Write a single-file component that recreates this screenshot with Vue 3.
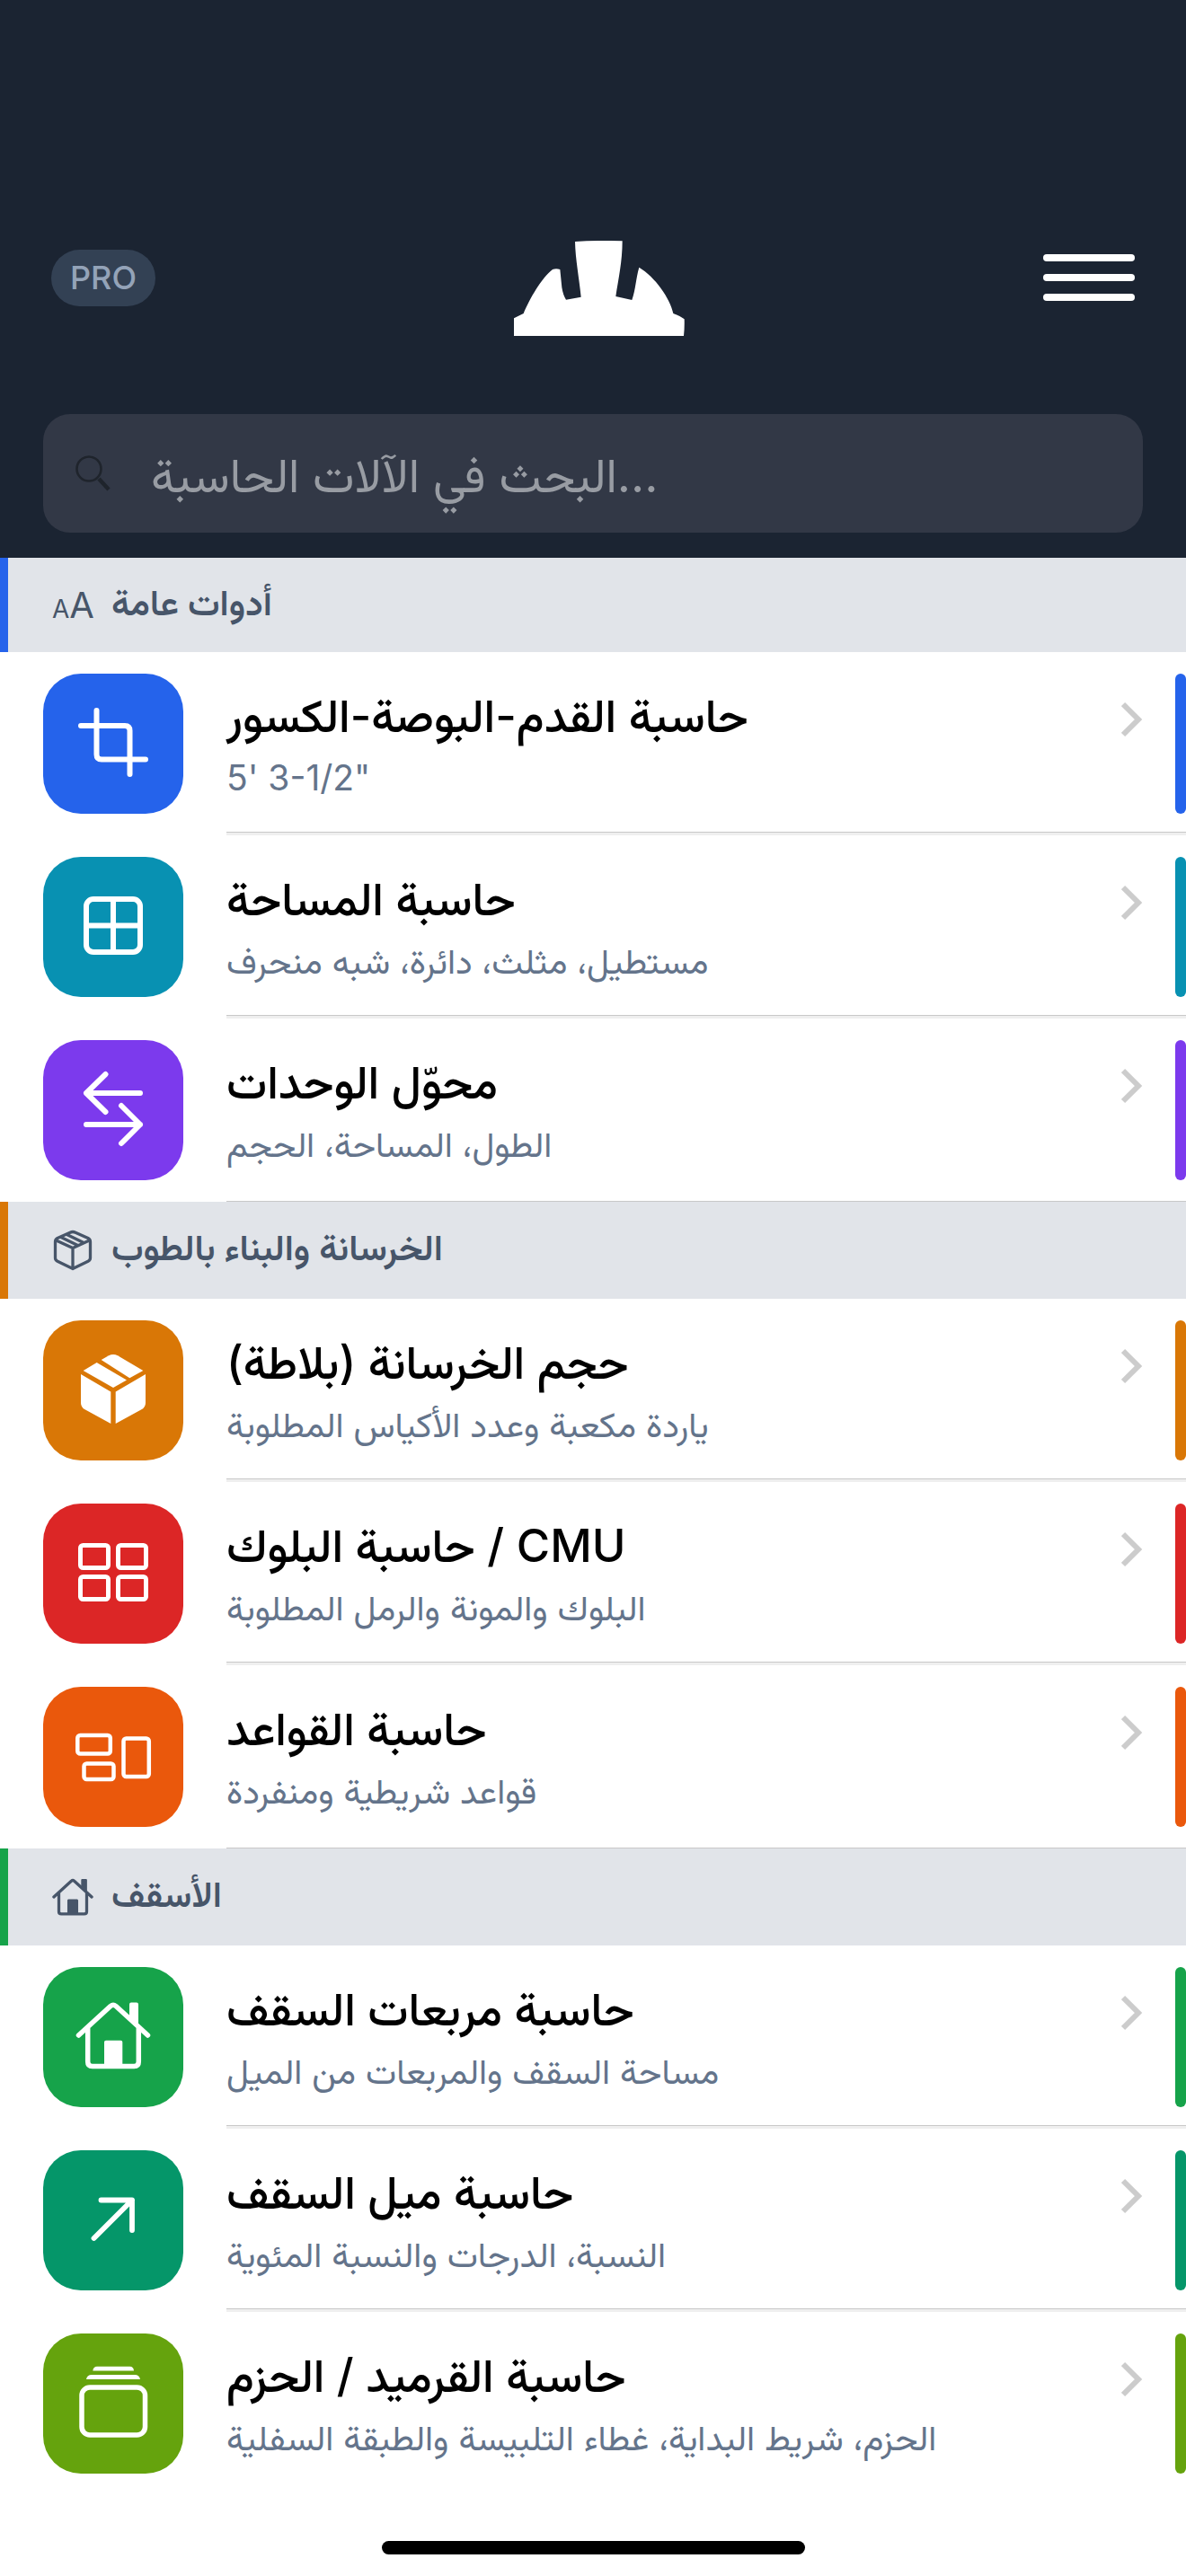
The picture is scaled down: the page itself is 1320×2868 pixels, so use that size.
<script setup>
import { ref } from 'vue'

const query = ref('')

const sections = [
  {
    title: 'أدوات عامة',
    icon: 'text',
    color: '#2563eb',
    items: [
      { title: 'حاسبة القدم-البوصة-الكسور', sub: '5\' 3-1/2"', icon: 'crop', color: '#2563eb' },
      { title: 'حاسبة المساحة', sub: 'مستطيل، مثلث، دائرة، شبه منحرف', icon: 'grid', color: '#0891b2' },
      { title: 'محوّل الوحدات', sub: 'الطول، المساحة، الحجم', icon: 'swap', color: '#7c3aed' },
    ]
  },
  {
    title: 'الخرسانة والبناء بالطوب',
    icon: 'box',
    color: '#d97706',
    items: [
      { title: 'حجم الخرسانة (بلاطة)', sub: 'ياردة مكعبة وعدد الأكياس المطلوبة', icon: 'cube', color: '#d97706' },
      { title: 'حاسبة البلوك / CMU', sub: 'البلوك والمونة والرمل المطلوبة', icon: 'blocks', color: '#dc2626' },
      { title: 'حاسبة القواعد', sub: 'قواعد شريطية ومنفردة', icon: 'footing', color: '#ea580c' },
    ]
  },
  {
    title: 'الأسقف',
    icon: 'house',
    color: '#16a34a',
    items: [
      { title: 'حاسبة مربعات السقف', sub: 'مساحة السقف والمربعات من الميل', icon: 'house', color: '#16a34a' },
      { title: 'حاسبة ميل السقف', sub: 'النسبة، الدرجات والنسبة المئوية', icon: 'arrow', color: '#059669' },
      { title: 'حاسبة القرميد / الحزم', sub: 'الحزم، شريط البداية، غطاء التلبيسة والطبقة السفلية', icon: 'stack', color: '#65a30d' },
    ]
  },
]
</script>

<template>
  <div class="app">
    <header class="header">
      <div class="top_bar">
        <button class="pro" type="button">PRO</button>
        <svg class="logo" viewBox="39 39 570 318" aria-hidden="true">
          <path d="M39 298L71 282C92 232 130 165 168 135Q180 130 193 135L199 195Q203 220 213 236L263 227C257 165 244 100 243 42Q320 37 401 40C401 110 388 165 379 225L433 237C446 200 446 165 457 128C510 160 560 230 571 282Q595 291 608 301Q609 330 606 357H39Z" fill="#fff" />
        </svg>
        <button class="menu" type="button" aria-label="القائمة">
          <span></span><span></span><span></span>
        </button>
      </div>
      <label class="search">
        <svg class="search_icon" viewBox="0 0 40 40" aria-hidden="true">
          <circle cx="15" cy="15" r="13.5" fill="none" stroke="#1f242c" stroke-width="2.6" />
          <path d="M26 26L37 38" stroke="#1f242c" stroke-width="4.5" />
        </svg>
        <input v-model="query" type="text" placeholder="البحث في الآلات الحاسبة..." aria-label="البحث">
      </label>
    </header>

    <main>
      <section v-for="section in sections" :key="section.title" class="group">
        <h2 class="group_title" :style="{ borderLeftColor: section.color }">
          <span v-if="section.icon === 'text'" class="text_icon" aria-hidden="true"><small>A</small>A</span>
          <svg v-else-if="section.icon === 'box'" class="group_icon" viewBox="0 0 46 46" fill="none" stroke="#475569" stroke-width="3.3" stroke-linejoin="round" aria-hidden="true">
            <path d="M23 2.5Q24.5 2.5 26 3.2L40 9.5Q42.5 10.800 42.5 13.5V31.5Q42.5 34 40 35.3L23 43.5L6 35.3Q3.500 34 3.5 31.5V13.5Q3.5 10.800 6 9.5L20 3.2Q21.5 2.5 23 2.5ZM4.5 12L23 20.5L41.5 12M23 20.5V43M10 8.5L28.5 17.5M16.5 5.5L35 14.5" />
          </svg>
          <svg v-else class="group_icon" viewBox="36 34 84 84" fill="none" stroke="#475569" stroke-width="6" stroke-linecap="round" stroke-linejoin="round" aria-hidden="true">
            <path d="M39.5 76L75 43.5Q78 41 81 43.5L116.5 76M49.7 68V105.5Q49.7 110.5 54.7 110.5H101.3Q106.3 110.5 106.3 105.5V68" />
            <path d="M67 111V83.5Q67 80.500 69 80.500H87Q89 80.500 89 83.5V111ZM95 54V41.5Q95 39.4 97 39.4H105Q107 39.4 107 41.5V64Z" fill="#475569" stroke="none" />
          </svg>
          <span class="group_name">{{ section.title }}</span>
        </h2>

        <a v-for="item in section.items" :key="item.title" class="row" href="#">
          <span class="tile" :style="{ backgroundColor: item.color }">
            <svg viewBox="0 0 156 156" fill="none" stroke="#fff" stroke-width="6" stroke-linecap="round" stroke-linejoin="round" aria-hidden="true">
              <g v-if="item.icon === 'crop'">
                <path d="M59.5 41V90Q59.5 95.5 65 95.5H114M42 58H91Q96.5 58 96.5 63.5V112" />
              </g>
              <g v-else-if="item.icon === 'grid'">
                <rect x="48" y="47" width="60" height="59" rx="8" />
                <path d="M78 47V106M48 76.5H108" />
              </g>
              <g v-else-if="item.icon === 'swap'">
                <path d="M48 59H108M69.5 38L48 59L69.5 80M48 94H108M87 73L108 94L87 115" />
              </g>
              <g v-else-if="item.icon === 'cube'" fill="#fff" stroke="none">
                <path d="M42 60L75.3 79.4V115L47 99.6Q42 97 42 92V60Z" />
                <path d="M114 60L80.7 79.4V115L109 99.6Q114 97 114 92V60Z" />
                <path d="M44.7 56L59.7 47L93 66.5L78 75Z" />
                <path d="M64.7 44L73 39.3Q78 36.6 83 39.3L111.3 56L96.3 64.3Z" />
              </g>
              <g v-else-if="item.icon === 'blocks'" stroke-width="5">
                <rect x="41.5" y="46.5" width="31" height="25" rx="3" />
                <rect x="83.5" y="46.5" width="31" height="25" rx="3" />
                <rect x="41.5" y="81.5" width="31" height="25" rx="3" />
                <rect x="83.5" y="81.5" width="31" height="25" rx="3" />
              </g>
              <g v-else-if="item.icon === 'footing'" stroke-width="4.5">
                <rect x="38.3" y="54" width="36.5" height="20.5" rx="3" />
                <rect x="45.5" y="85.5" width="33" height="17.5" rx="3" />
                <rect x="89.5" y="57.5" width="28.3" height="42.5" rx="3" />
              </g>
              <g v-else-if="item.icon === 'house'" stroke-width="5.5">
                <path d="M39.5 76L75 43.5Q78 41 81 43.5L116.5 76M49.7 68V105.5Q49.7 110.5 54.7 110.5H101.3Q106.3 110.5 106.3 105.5V68" />
                <path d="M68 111V83.5Q68 81.7 70 81.7H86.3Q88.3 81.7 88.3 83.5V111ZM96 55V41.5Q96 39.4 98 39.4H104Q106 39.4 106 41.5V65Z" fill="#fff" stroke="none" />
              </g>
              <g v-else-if="item.icon === 'arrow'" stroke-width="5.8">
                <path d="M56.5 98L99 55.5M64.5 55.5H99V89" />
              </g>
              <g v-else stroke-width="5.5">
                <rect x="43" y="60" width="70.5" height="53" rx="9" />
                <path d="M48 51Q49 46 54 46H102Q107 46 108 51ZM55.3 41.4Q56 36.8 60 36.8H96.5Q100.5 36.8 101 41.4Z" fill="#fff" stroke="none" />
              </g>
            </svg>
          </span>
          <span class="row_body">
            <span class="row_text">
              <span class="row_title">{{ item.title }}</span>
              <span class="row_sub">{{ item.sub }}</span>
            </span>
            <svg class="chevron" viewBox="0 0 24 40" fill="none" stroke="#ccc" stroke-width="6" aria-hidden="true">
              <path d="M2 3L19 20L2 37" />
            </svg>
            <span class="accent" :style="{ backgroundColor: item.color }"></span>
          </span>
        </a>
      </section>
    </main>

    <div class="home_bar"></div>
  </div>
</template>

<style>
body {
  background: #fff;
}
</style>

<style scoped>
.app {
  direction: ltr;
  font-family: Inter, Vazirmatn, "Noto Sans Arabic", "DejaVu Sans", sans-serif;
  background: #fff;
  padding-bottom: 24px;
}

.header {
  background: #1b2432;
  padding: 244px 48px 28px;
}

.top_bar {
  display: flex;
  align-items: center;
  justify-content: space-between;
  padding: 0 9px;
  margin-bottom: 87px;
}

button {
  border: none;
  cursor: pointer;
  font-family: inherit;
}

.pro {
  width: 116px;
  height: 63px;
  padding: 0;
  border-radius: 32px;
  background: #334154;
  color: #94a3b8;
  font-size: 36px;
  font-weight: 500;
}

.logo {
  width: 190px;
  height: 106px;
  padding-top: 24px;
}

.menu {
  display: flex;
  flex-direction: column;
  gap: 14px;
  width: 102px;
  padding: 0;
  background: none;
}

.menu span {
  height: 8px;
  border-radius: 4px;
  background: #fff;
}

.search {
  display: flex;
  align-items: center;
  gap: 44px;
  height: 132px;
  padding: 0 36px;
  border-radius: 30px;
  background: #323846;
}

.search_icon {
  width: 40px;
  height: 40px;
}

.search input {
  flex: 1;
  height: 100%;
  padding: 4px 0 0;
  box-sizing: border-box;
  border: none;
  outline: none;
  background: none;
  color: #fff;
  font-family: inherit;
  font-size: 53px;
}

.search input::placeholder {
  color: #989ca3;
  opacity: 1;
}

.group_title {
  display: flex;
  align-items: center;
  gap: 20px;
  height: 108px;
  margin: 0;
  padding-left: 49px;
  border-left: 9px solid;
  background: #e1e4e9;
  color: #475569;
  font-size: 40px;
  font-weight: 600;
}

.group:first-child .group_title {
  height: 105px;
}

.group_icon,
.text_icon {
  flex: none;
  width: 46px;
}

.group_icon {
  height: 46px;
}

.text_icon {
  font-size: 40px;
  font-weight: 400;
  white-space: nowrap;
}

.text_icon small {
  font-size: 28px;
}

.group_name {
  line-height: 60px;
  padding-bottom: 6px;
}

.row {
  display: flex;
  height: 204px;
  gap: 48px;
  padding-left: 48px;
  color: #000;
  text-decoration: none;
}

.tile {
  flex: none;
  width: 156px;
  height: 156px;
  margin-top: 24px;
  border-radius: 42px;
}

.tile svg {
  display: block;
}

.row_body {
  flex: 1;
  display: flex;
  align-items: flex-start;
  box-sizing: border-box;
  padding-top: 24px;
  border-bottom: 3px solid #efefef;
  box-shadow: inset 0 -1px #c8c8c8;
}

.row:last-child .row_body {
  border-bottom: none;
}

.group:last-child .row:last-child .row_body {
  box-shadow: none;
}

.row_text {
  flex: 1;
  display: flex;
  flex-direction: column;
  padding-top: 14px;
}

.row_title {
  font-size: 51px;
  font-weight: 500;
  line-height: 66px;
}

.row_sub {
  color: #64748b;
  font-size: 39px;
  line-height: 72px;
}

.chevron {
  flex: none;
  width: 24px;
  height: 40px;
  margin: 31px 36px 0 0;
}

.accent {
  flex: none;
  width: 12px;
  height: 156px;
  border-radius: 6px;
}

.home_bar {
  width: 471px;
  height: 15px;
  margin: 51px auto 0;
  border-radius: 8px;
  background: #000;
}
</style>
